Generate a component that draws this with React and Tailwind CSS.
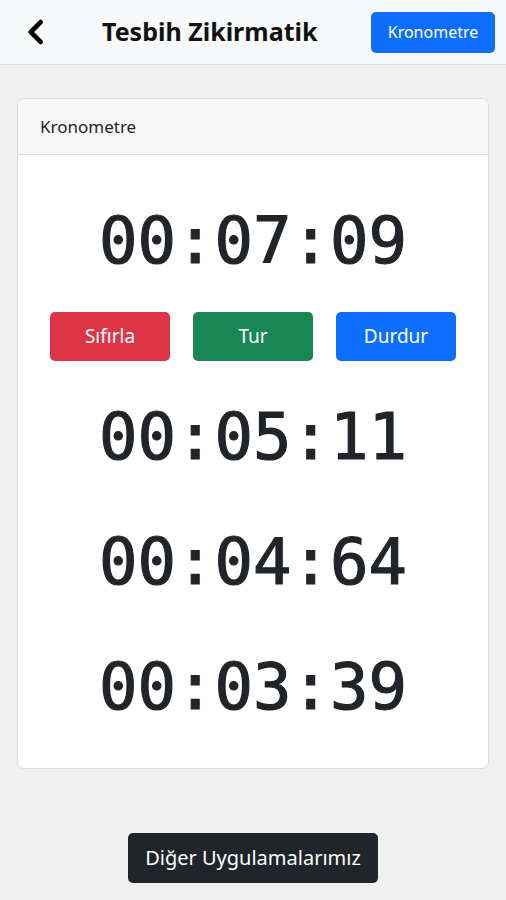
import React from "react";

function Time({ t }) {
  return (
    <div
      className="text-center text-[64px] leading-[80px] text-[#212529] [-webkit-text-stroke:1.2px_#212529]"
      style={{ fontFamily: '"DejaVu Sans Mono", monospace' }}
    >
      {t}
    </div>
  );
}

export default function App() {
  return (
    <div
      className="w-[506px] h-[900px] bg-[#f0f0f0] flex flex-col"
      style={{ fontFamily: '"Noto Sans", "Open Sans", sans-serif' }}
    >
      <header className="h-[65px] bg-[#f8f9fa] border-b border-[#dcdcdc] flex items-center px-[22px] shrink-0">
        <svg width="28" height="28" viewBox="0 0 24 24" className="mr-[52px]">
          <path d="M16 3.5 L7.5 12 L16 20.5" fill="none" stroke="#000" strokeWidth="4" strokeLinecap="round" strokeLinejoin="round" />
        </svg>
        <div className="text-[25px] font-bold text-[#111] flex-1">Tesbih Zikirmatik</div>
        <button className="h-[41px] w-[124px] bg-[#0d6efd] text-white rounded-[5px] text-[16px] mr-[-11px]">
          Kronometre
        </button>
      </header>

      <div className="px-[17px] pt-[33px]">
        <div className="bg-white border border-[#dcdcdc] rounded-[7px] overflow-hidden">
          <div className="h-[56px] bg-[#f7f7f7] border-b border-[#dcdcdc] flex items-center px-[22px] text-[17px] text-[#212529]">
            Kronometre
          </div>
          <div className="pt-[46px] pb-[41px]">
            <Time t="00:07:09" />
            <div className="flex justify-center gap-[23px] mt-[31px] mb-[36px]">
              <button className="w-[120px] h-[49px] rounded-[5px] bg-[#dc3545] text-white text-[19px]">Sıfırla</button>
              <button className="w-[120px] h-[49px] rounded-[5px] bg-[#198754] text-white text-[19px]">Tur</button>
              <button className="w-[120px] h-[49px] rounded-[5px] bg-[#0d6efd] text-white text-[19px]">Durdur</button>
            </div>
            <div className="flex flex-col gap-[45px]">
              <Time t="00:05:11" />
              <Time t="00:04:64" />
              <Time t="00:03:39" />
            </div>
          </div>
        </div>
      </div>

      <div className="flex justify-center mt-auto mb-[17px]">
        <button className="h-[50px] px-[17px] rounded-[5px] bg-[#212529] text-white text-[20px]">
          Diğer Uygulamalarımız
        </button>
      </div>
    </div>
  );
}
